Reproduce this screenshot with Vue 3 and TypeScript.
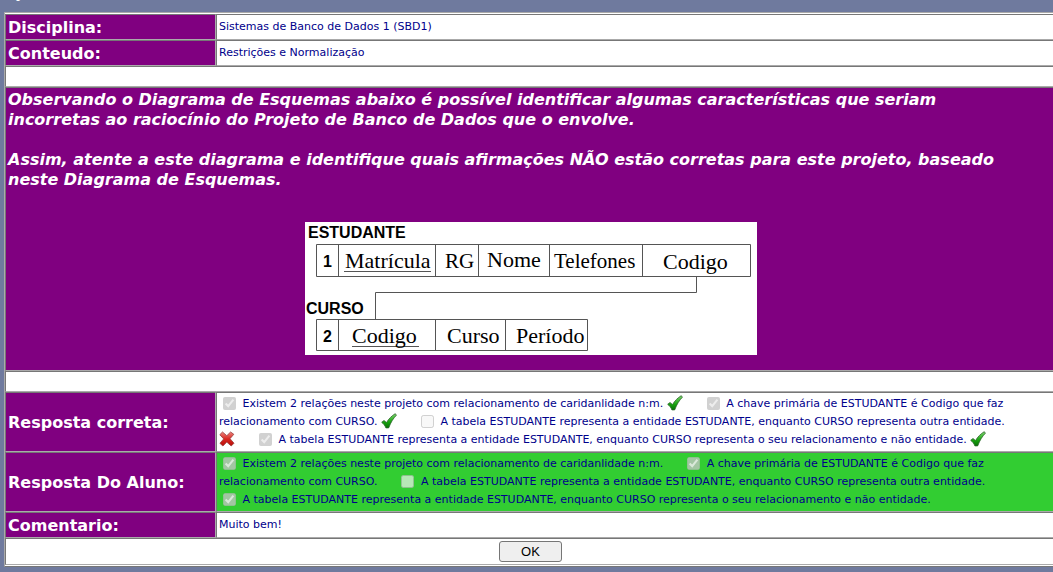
<script setup lang="ts">
interface Answer {
  text: string
  checked: boolean
  correct: boolean
}

const answers: Answer[] = [
  { text: 'Existem 2 relações neste projeto com relacionamento de caridanlidade n:m.', checked: true, correct: true },
  { text: 'A chave primária de ESTUDANTE é Codigo que faz relacionamento com CURSO.', checked: true, correct: true },
  { text: 'A tabela ESTUDANTE representa a entidade ESTUDANTE, enquanto CURSO representa outra entidade.', checked: false, correct: false },
  { text: 'A tabela ESTUDANTE representa a entidade ESTUDANTE, enquanto CURSO representa o seu relacionamento e não entidade.', checked: true, correct: true },
]
</script>

<template>
  <main class="page">
    <h1 class="title">Q</h1>
    <table class="sheet">
      <colgroup>
        <col class="label-col" />
        <col />
      </colgroup>
      <tbody>
        <tr>
          <th scope="row">Disciplina:</th>
          <td>Sistemas de Banco de Dados 1 (SBD1)</td>
        </tr>
        <tr>
          <th scope="row">Conteudo:</th>
          <td>Restrições e Normalização</td>
        </tr>
        <tr class="spacer"><td colspan="2"></td></tr>
        <tr>
          <td colspan="2" class="question">
            <p>Observando o Diagrama de Esquemas abaixo é possível identificar algumas características que seriam incorretas ao raciocínio do Projeto de Banco de Dados que o envolve.</p>
            <p>Assim, atente a este diagrama e identifique quais afirmações NÃO estão corretas para este projeto, baseado neste Diagrama de Esquemas.</p>
            <svg class="diagram" viewBox="0 0 452 133" width="452" height="133" role="img" aria-label="Diagrama de Esquemas">
              <rect width="452" height="133" fill="#fff" />
              <g fill="none" stroke="#555" stroke-width="1">
                <path d="M11.500 22.500H445.500V54.500H11.500ZM33.500 22.500V54.500M130.500 22.500V54.500M173.500 22.500V54.500M244.500 22.500V54.500M337.500 22.500V54.500" />
                <path d="M11.500 97.500H282.500V128.500H11.500ZM33.500 97.500V128.500M130.500 97.500V128.500M200.500 97.500V128.500" />
                <path d="M391.500 54.500V70.500H70.500V97.500" />
                <path d="M39 49.500H126M47 124.500H114" />
              </g>
              <g class="name">
                <text x="3" y="16">ESTUDANTE</text>
                <text x="1" y="92">CURSO</text>
                <text x="18" y="45">1</text>
                <text x="18" y="120">2</text>
              </g>
              <g class="field">
                <text x="40" y="46">Matrícula</text>
                <text x="140" y="46" class="narrow">RG</text>
                <text x="182" y="45">Nome</text>
                <text x="249" y="46" class="narrow">Telefones</text>
                <text x="358" y="47">Codigo</text>
                <text x="47" y="121">Codigo</text>
                <text x="142" y="121">Curso</text>
                <text x="211" y="121">Período</text>
              </g>
            </svg>
          </td>
        </tr>
        <tr class="spacer"><td colspan="2"></td></tr>
        <tr>
          <th scope="row">Resposta correta:</th>
          <td class="answers">
            <template v-for="(a, i) in answers" :key="i">
              <span class="answer"><input :id="`key-${i}`" type="checkbox" :checked="a.checked" disabled />&#32;<label :for="`key-${i}`">{{ a.text }}</label>&#32;<svg v-if="a.correct" class="mark" viewBox="0 0 16 16" role="img" aria-label="Correta">
                <defs>
                  <linearGradient :id="`ok-${i}`" x1="0" y1="0" x2="0" y2="1">
                    <stop offset="0" stop-color="#7fd66f" />
                    <stop offset="0.6" stop-color="#16a30e" />
                    <stop offset="1" stop-color="#087006" />
                  </linearGradient>
                </defs>
                <path d="M.7 9.300L3 7.500L5.500 9.600C7.600 6 10.600 2.800 14.300.7L15.400 2.200C12.200 5.400 9.800 9.300 7.700 14.900H4.900C4 12.500 2.600 10.800.7 9.300Z" :fill="`url(#ok-${i})`" stroke="#2b642a" stroke-width=".8" />
              </svg><svg v-else class="mark" viewBox="0 0 16 16" role="img" aria-label="Incorreta">
                <defs>
                  <linearGradient :id="`no-${i}`" x1="0" y1="0" x2="0" y2="1">
                    <stop offset="0" stop-color="#ee8580" />
                    <stop offset="0.5" stop-color="#d82720" />
                    <stop offset="1" stop-color="#b80b08" />
                  </linearGradient>
                </defs>
                <path d="M3.500 1L7.800 4.700L11.600 1L14.800 3.300L11 7.700L15 12.200L12.200 15L7.800 11.100L3.900 15L.9 12.300L4.700 7.900L.8 3.700Z" :fill="`url(#no-${i})`" stroke="#973d3a" stroke-width=".8" stroke-linejoin="round" />
              </svg></span>&#32;
            </template>
          </td>
        </tr>
        <tr>
          <th scope="row">Resposta Do Aluno:</th>
          <td class="answers student">
            <template v-for="(a, i) in answers" :key="i">
              <span class="answer"><input :id="`student-${i}`" type="checkbox" :checked="a.checked" disabled />&#32;<label :for="`student-${i}`">{{ a.text }}</label></span>&#32;
            </template>
          </td>
        </tr>
        <tr>
          <th scope="row">Comentario:</th>
          <td>Muito bem!</td>
        </tr>
        <tr>
          <td colspan="2" class="actions"><button type="button">OK</button></td>
        </tr>
      </tbody>
    </table>
  </main>
</template>

<style>
body {
  background: #6f7a9e;
  overflow: hidden;
}
</style>

<style scoped>
.page {
  padding: 0 0 6px 4px;
  font-family: Verdana, "DejaVu Sans", sans-serif;
}
.title {
  display: flex;
  align-items: flex-end;
  box-sizing: border-box;
  height: 12px;
  margin: 0;
  padding: 0 0 10px 4px;
  color: #fff;
  font-size: 16px;
  line-height: 16px;
}
.sheet {
  width: calc(100% + 2px);
  box-sizing: content-box;
  table-layout: fixed;
  border-collapse: separate;
  border-spacing: 0;
  border: 1px solid;
  border-color: #aaa #777 #777 #aaa;
  padding: 1px 0;
  background: #fff;
}
.label-col {
  width: 211px;
}
th,
td {
  border: 1px solid;
  border-color: #777 #aaa #aaa #777;
  padding: 2px;
  font-size: 11px;
  line-height: 18px;
  color: #00008b;
  text-align: left;
  vertical-align: middle;
}
th {
  padding: 3px 2px 1px;
  background: #800080;
  color: #fff;
  font-size: 16px;
  line-height: 20px;
}
.spacer td {
  height: 15px;
}
.question {
  background: #800080;
  color: #fff;
  font-size: 16px;
  font-weight: bold;
  font-style: italic;
  line-height: 20px;
}
.question p {
  margin: 0 0 20px;
  padding-right: 36px;
}
.diagram {
  display: block;
  margin: 32px auto 13px;
  font-style: normal;
}
.name {
  font: bold 16px "Liberation Sans", Arial, sans-serif;
}
.field {
  font: 22px "Liberation Serif", "Times New Roman", serif;
}
.field .narrow {
  font-size: 21px;
}
.answer {
  margin-right: 20px;
}
.answers {
  padding-right: 40px;
}
.answers input {
  width: 13px;
  height: 13px;
  margin: 0 3px 0 4px;
  vertical-align: -3px;
}
.mark {
  width: 16px;
  height: 16px;
  vertical-align: -4px;
}
.student {
  background: #32cd32;
}
.actions {
  text-align: center;
}
button {
  display: block;
  width: 63px;
  height: 21px;
  margin: 0 auto;
  padding: 0;
  border: 1px solid #767676;
  border-radius: 3px;
  background: #efefef;
  color: #000;
  font: 13px "Liberation Sans", Arial, sans-serif;
}
</style>
